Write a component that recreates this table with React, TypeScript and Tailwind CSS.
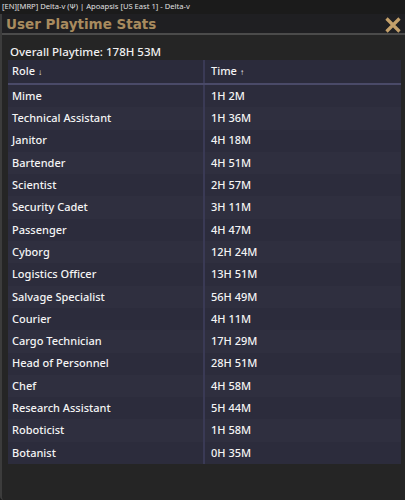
import React from "react";

const rows: [string, string][] = [
  ["Mime", "1H 2M"],
  ["Technical Assistant", "1H 36M"],
  ["Janitor", "4H 18M"],
  ["Bartender", "4H 51M"],
  ["Scientist", "2H 57M"],
  ["Security Cadet", "3H 11M"],
  ["Passenger", "4H 47M"],
  ["Cyborg", "12H 24M"],
  ["Logistics Officer", "13H 51M"],
  ["Salvage Specialist", "56H 49M"],
  ["Courier", "4H 11M"],
  ["Cargo Technician", "17H 29M"],
  ["Head of Personnel", "28H 51M"],
  ["Chef", "4H 58M"],
  ["Research Assistant", "5H 44M"],
  ["Roboticist", "1H 58M"],
  ["Botanist", "0H 35M"],
];

export default function App() {
  return (
    <div
      className="w-[405px] h-[500px] bg-[#1b1b1b] flex flex-col overflow-hidden text-[#e8e8e8]"
      style={{ fontFamily: '"Noto Sans", "Open Sans", sans-serif' }}
    >
      <div className="h-[14px] flex items-center px-[2px] text-[7.6px] leading-none text-[#e0e0e0]">
        [EN][MRP] Delta-v (Ψ) | Apoapsis [US East 1] - Delta-v
      </div>
      <div className="flex-1 flex flex-col border-l-[2px] border-[#3c3c3c] rounded-bl-[4px] bg-[#252525] overflow-hidden">
        <div className="h-[19px] bg-[#1f1f22] flex items-center justify-between pl-[4px] pr-[2px]">
          <span
            className="text-[13.5px] font-bold text-[#a88b5e] leading-none pt-[3px]"
            style={{ fontFamily: '"DejaVu Sans", sans-serif' }}
          >
            User Playtime Stats
          </span>
          <svg width="18" height="18" viewBox="0 0 18 18" className="mr-[1px] mt-[2px]">
            <path d="M2.5 2.5 L15.5 15.5 M15.5 2.5 L2.5 15.5" stroke="#c4a06a" strokeWidth="3.2" strokeLinecap="butt" />
          </svg>
        </div>
        <div className="h-[2px] bg-[#4b4b4b]" />
        <div className="flex-1 pl-[6px] pr-[2px] pt-[8px]">
          <div className="text-[11.5px] leading-[15px] h-[17px] text-[#f0f0f0] pl-[2px] font-medium pt-[1px]">
            Overall Playtime: 178H 53M
          </div>
          <div className="flex flex-col text-[11px] font-medium text-[#f4f4f4] w-[393px]">
            <div className="flex h-[25px] bg-[#2b2b3b] border-b-[2px] border-[#4a4a68]">
              <div className="w-[197px] flex items-center pl-[4px] border-r-[2px] border-[#3a3a55]">
                Role <span className="text-[8px] ml-[3px]">↓</span>
              </div>
              <div className="flex-1 flex items-center pl-[6px]">
                Time <span className="text-[8px] ml-[3px]">↑</span>
              </div>
            </div>
            {rows.map(([role, time], i) => (
              <div
                key={role}
                className={`flex h-[22.3px] ${i % 2 === 0 ? "bg-[#2c2c3c]" : "bg-[#2f2f3f]"}`}
              >
                <div className="w-[197px] flex items-center pl-[4px] border-r-[2px] border-[#3a3a55]">
                  {role}
                </div>
                <div className="flex-1 flex items-center pl-[6px]">{time}</div>
              </div>
            ))}
          </div>
        </div>
      </div>
    </div>
  );
}
